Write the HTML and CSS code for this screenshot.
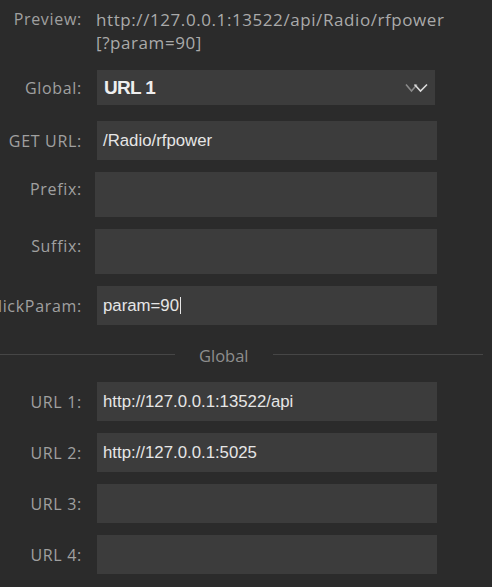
FILE: index.html
```html
<!DOCTYPE html>
<html lang="en">
<head>
<meta charset="utf-8">
<title>Action settings</title>
<link rel="stylesheet" href="styles.css">
</head>
<body>
<div class="panel">
  <div class="row row-preview">
    <span class="label">Preview:</span>
    <div class="preview">http://127.0.0.1:13522/api/Radio/rfpower<br>[?param=90]</div>
  </div>
  <div class="row row-select">
    <span class="label">Global:</span>
    <div class="select">
      <span class="select-value">URL 1</span>
      <svg class="chevron" width="24" height="10" viewBox="0 0 24 10">
        <polyline points="1,1.5 6.5,8 12,1.5" fill="none" stroke="#8a8a8a" stroke-width="1.6"/>
        <polyline points="9.5,1.5 15.5,8 22,1.5" fill="none" stroke="#dcdcdc" stroke-width="1.6"/>
      </svg>
    </div>
  </div>
  <div class="row">
    <span class="label">GET URL:</span>
    <div class="field">/Radio/rfpower</div>
  </div>
  <div class="row row-tall">
    <span class="label">Prefix:</span>
    <div class="field field-tall"></div>
  </div>
  <div class="row row-tall">
    <span class="label">Suffix:</span>
    <div class="field field-tall"></div>
  </div>
  <div class="row">
    <span class="label">ClickParam:</span>
    <div class="field">param=90<span class="caret"></span></div>
  </div>
  <div class="separator">
    <span class="sep-line sep-left"></span>
    <span class="sep-text">Global</span>
    <span class="sep-line sep-right"></span>
  </div>
  <div class="row">
    <span class="label">URL 1:</span>
    <div class="field">http://127.0.0.1:13522/api</div>
  </div>
  <div class="row">
    <span class="label">URL 2:</span>
    <div class="field">http://127.0.0.1:5025</div>
  </div>
  <div class="row">
    <span class="label">URL 3:</span>
    <div class="field"></div>
  </div>
  <div class="row">
    <span class="label">URL 4:</span>
    <div class="field"></div>
  </div>
</div>
</body>
</html>
```
FILE: styles.css
```css
html, body {
  margin: 0;
  padding: 0;
  background: #2b2b2b;
  overflow: hidden;
}

body {
  width: 492px;
  height: 587px;
  font-family: "Open Sans", "Noto Sans", sans-serif;
}

.panel {
  display: flex;
  flex-direction: column;
  gap: 12px;
  padding-top: 8px;
  width: 483px;
}

.row {
  display: flex;
  align-items: center;
  gap: 15px;
}

.label {
  flex: 0 0 82px;
  width: 82px;
  min-width: 0;
  display: flex;
  justify-content: flex-end;
  white-space: nowrap;
  font-size: 16px;
  letter-spacing: 0.7px;
  color: #a0a0a0;
}

.row-preview {
  align-items: flex-start;
  gap: 14px;
}

.row-preview .label {
  line-height: 23px;
}

.preview {
  font-size: 17px;
  line-height: 23px;
  letter-spacing: 0.58px;
  color: #aaaaaa;
  white-space: nowrap;
}

.row-select {
  margin: 4px 0;
}

.select {
  box-sizing: border-box;
  width: 338px;
  height: 35px;
  background: #3c3c3c;
  display: flex;
  align-items: center;
  justify-content: space-between;
  padding: 0 6px 0 7px;
}

.select-value {
  font-family: "Liberation Sans", Arial, sans-serif;
  font-weight: bold;
  font-size: 19px;
  letter-spacing: -0.7px;
  color: #eeeeee;
}

.chevron {
  display: block;
}

.field {
  box-sizing: border-box;
  width: 340px;
  height: 39px;
  background: #3c3c3c;
  padding: 0 6px;
  display: flex;
  align-items: center;
  font-family: "Liberation Sans", Arial, sans-serif;
  font-size: 16.8px;
  color: #e6e6e6;
  white-space: nowrap;
}

.row-tall {
  align-items: flex-start;
}

.row-tall .label {
  line-height: 34px;
}

.field-tall {
  height: 45px;
  width: 342px;
  margin-left: -2px;
}

.caret {
  display: inline-block;
  width: 1px;
  height: 17px;
  background: #e6e6e6;
  margin-left: 1px;
}

.separator {
  display: flex;
  align-items: flex-start;
  margin: 7px 0 2px;
}

.sep-line {
  height: 1px;
  background: #464646;
  margin-top: 9.5px;
}

.sep-left {
  flex: 0 0 175px;
}

.sep-right {
  flex: 1 1 auto;
}

.sep-text {
  padding: 0 24px;
  font-size: 16.5px;
  line-height: 24px;
  color: #8e8e8e;
}
```
